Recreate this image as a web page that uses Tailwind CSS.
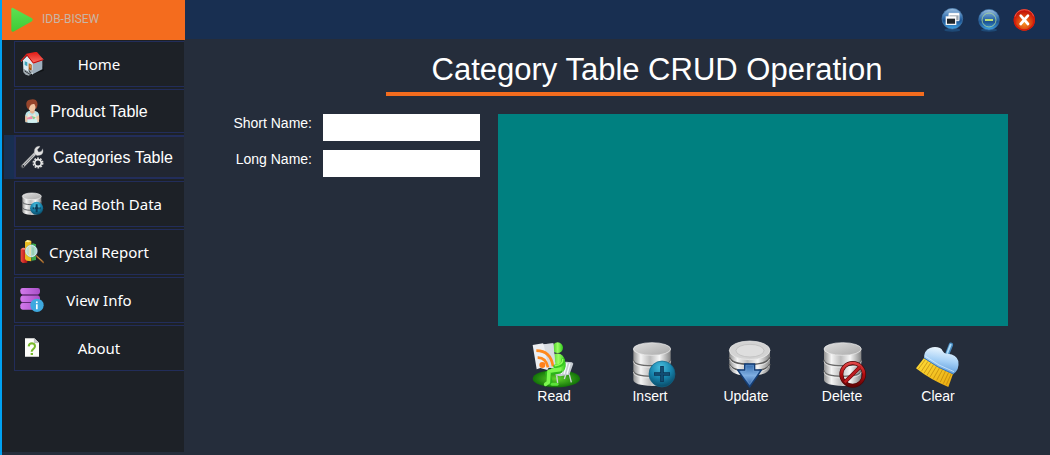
<!DOCTYPE html>
<html lang="en">
<head>
<meta charset="utf-8">
<meta name="viewport" content="width=device-width, initial-scale=1">
<title>Category Table CRUD Operation</title>
<script src="https://cdn.jsdelivr.net/npm/@tailwindcss/browser@4"></script>
</head>
<body class="flex min-h-screen border-l-2 border-[#00a2f3] bg-[#252d3b] text-white font-['Liberation_Sans',Arial,sans-serif]">
<svg width="0" height="0" class="absolute" aria-hidden="true">
  <defs>
    <linearGradient id="metal"><stop offset="0" stop-color="#929292"/><stop offset=".2" stop-color="#f4f4f4"/><stop offset=".45" stop-color="#bcbcbc"/><stop offset=".7" stop-color="#f6f6f6"/><stop offset="1" stop-color="#858585"/></linearGradient>
    <linearGradient id="lid" x1="0" y1="0" x2="1" y2="1"><stop offset="0" stop-color="#dedede"/><stop offset="1" stop-color="#a9a9a9"/></linearGradient>
    <radialGradient id="teal" cx=".45" cy=".25" r=".8"><stop offset="0" stop-color="#4cc0df"/><stop offset=".5" stop-color="#1785ae"/><stop offset="1" stop-color="#07435f"/></radialGradient>
    <linearGradient id="orb" x1="0" y1="0" x2="0" y2="1"><stop offset="0" stop-color="#9dbfe0"/><stop offset=".4" stop-color="#3d78b5"/><stop offset=".6" stop-color="#1c5290"/><stop offset="1" stop-color="#3fa4e6"/></linearGradient>
    <radialGradient id="redorb" cx=".5" cy=".65" r=".6"><stop offset="0" stop-color="#f79420"/><stop offset=".55" stop-color="#dc4310"/><stop offset="1" stop-color="#be0d08"/></radialGradient>
    <linearGradient id="play" x1="0" y1="0" x2="0" y2="1"><stop offset="0" stop-color="#5ce052"/><stop offset="1" stop-color="#3fcb35"/></linearGradient>
    <linearGradient id="arrow" x1="0" y1="0" x2="0" y2="1"><stop offset="0" stop-color="#2f67aa"/><stop offset=".5" stop-color="#7eaee2"/><stop offset="1" stop-color="#1e5197"/></linearGradient>
    <linearGradient id="brush" x1=".6" y1="0" x2=".4" y2="1"><stop offset="0" stop-color="#f2faff"/><stop offset=".5" stop-color="#a5d0f6"/><stop offset="1" stop-color="#5496da"/></linearGradient>
    <linearGradient id="bristle" x1="0" y1="0" x2="1" y2="1"><stop offset="0" stop-color="#ffdf39"/><stop offset="1" stop-color="#e9a90e"/></linearGradient>
    <linearGradient id="purple"><stop offset="0" stop-color="#d37aec"/><stop offset="1" stop-color="#a94fc8"/></linearGradient>
    <linearGradient id="red"><stop offset="0" stop-color="#ee4a3c"/><stop offset="1" stop-color="#a90d12"/></linearGradient>
    <radialGradient id="grass"><stop offset="0" stop-color="#62d52b"/><stop offset="1" stop-color="#127208"/></radialGradient>
    <linearGradient id="green"><stop offset="0" stop-color="#36bd20"/><stop offset=".5" stop-color="#9bff61"/><stop offset="1" stop-color="#30c91e"/></linearGradient>
    <linearGradient id="roof" x1="0" y1="0" x2="0" y2="1"><stop offset="0" stop-color="#e01812"/><stop offset="1" stop-color="#ff7468"/></linearGradient>
    <linearGradient id="noSign" x1="0" y1="0" x2="0" y2="1"><stop offset="0" stop-color="#e04646"/><stop offset=".5" stop-color="#b30d10"/><stop offset="1" stop-color="#650406"/></linearGradient>
  </defs>
</svg>

<aside class="flex w-[183px] shrink-0 flex-col">
  <div class="flex h-10 items-center gap-2 bg-[#f46c1e] pl-2">
    <svg class="h-7 w-6" viewBox="30 12 72 84" aria-hidden="true"><path d="M39 18 96 49Q101 54 96 58L40 89Q34 91 34 84V22Q34 16 39 18Z" fill="url(#play)"/></svg>
    <span class="pb-0.5 font-['Roboto',sans-serif] text-xs text-[#c9b5a5]">IDB-BISEW</span>
  </div>
  <nav class="mr-px mb-[3px] flex grow flex-col gap-0.5 bg-[#1d2127] pt-px font-['Noto_Sans',sans-serif] text-[15px]">
    <button type="button" class="ml-3 flex h-[46px] items-center border border-r-0 border-[#222d5a] pl-[5px]">
      <svg class="size-6" viewBox="60 156 72 72" aria-hidden="true">
        <path d="M70 216 86 227 131 212 130 199 84 207Z" fill="#080a0d" opacity=".65"/>
        <path d="m69 181 13-14 17 20v37l-29-17z" fill="#dceaf1"/><path d="m98 189 29-15v34l-29 15z" fill="#9eafbd"/>
        <path d="m62 182 17-21 31-6 21 24-31 12-20-25-16 20Z" fill="url(#roof)"/>
        <path d="m63 183 17-19 20 25 30-10" fill="none" stroke="#b90909" stroke-width="3"/>
        <path d="m74 184 8 3v12l-8-4z" fill="#3fa4b8"/><path d="m86 190 9 4v20l-9-6z" fill="#a54e0d"/><path d="m88 192 5 3v10l-5-3z" fill="#dc8c3b"/>
        <path d="m69 207 15 8 12-6 6 5-15 13-10-3-7-7Z" fill="#a3adb4"/><path d="m74 213 16 10m-4-14 6 11" stroke="#34393e" stroke-width="3"/>
      </svg>
      <span class="flex-1 pr-[30px]">Home</span>
    </button>
    <button type="button" class="ml-3 flex h-11 items-center border border-r-0 border-[#222d5a] pl-[5px]">
      <svg class="size-6" viewBox="60 42 72 72" aria-hidden="true">
        <path d="M76 112V91q0-10 13-14h15q12 3 13 13v22q-21 4-41 0Z" fill="#b9e3e7"/>
        <path d="M76 91q-2 14 1 20h5l1-15m34-6q2 14-1 21h-6l-2-15" fill="#efc2a0"/>
        <path d="M90 73h14v9q-7 8-14 0z" fill="#e5ae8a"/><ellipse cx="96" cy="64" rx="12" ry="15" fill="#f2c7a4"/>
        <path d="M81 68q-7-20 8-24 19-5 23 9 2 11-4 19-1-9-5-15-11-2-14 8l-3 9z" fill="#96452c"/>
        <path d="m84 84 12 10 9-10 5 18H82z" fill="#f0e6d5"/><path d="m80 99 15-6 5 7-15 7z" fill="#ef8ca8"/><path d="m95 93 12 4-6 7z" fill="#7fcf8f"/><path d="M83 103h29v10H83z" fill="#d3f1f0"/>
      </svg>
      <span class="flex-1 pt-0.5 pr-[30px] font-['Liberation_Sans',Arial,sans-serif] text-base">Product Table</span>
    </button>
    <button type="button" aria-current="page" class="ml-0.5 flex h-11 items-stretch bg-[#182f51]">
      <span class="ml-2.5 flex flex-1 items-center border-y-2 border-l-2 border-[#222d5a] bg-[#212631] pl-1">
      <svg class="size-6" viewBox="60 180 72 72" aria-hidden="true">
        <path d="m68 244 38-39" stroke="#414449" stroke-width="12" stroke-linecap="round"/><path d="m69 243 38-39" stroke="#c9cacc" stroke-width="8" stroke-linecap="round"/><path d="m73 239 27-28" stroke="#77797c" stroke-width="3"/>
        <path d="M103 205q-3-20 15-22l2 2-8 9 4 7 8-2 4-8q5 15-8 20l-9 1Z" fill="#e2e2e2" stroke="#717478"/>
        <circle cx="70" cy="243" r="3" fill="#24282f"/>
        <circle cx="114" cy="234" r="14" fill="none" stroke="#d8d8d8" stroke-width="5" stroke-dasharray="5.5 3.3"/><circle cx="114" cy="234" r="10" fill="none" stroke="#e7e7e7" stroke-width="5"/>
      </svg>
      <span class="flex-1 pt-0.5 pr-0.5 font-['Liberation_Sans',Arial,sans-serif] text-base">Categories Table</span>
      </span>
    </button>
    <button type="button" class="ml-3 flex h-[46px] items-center border border-r-0 border-[#222d5a] pl-[5px]">
      <svg class="size-6" viewBox="60 36 72 72" aria-hidden="true">
        <path d="M67 50v44q0 10 28 11 29-1 29-11V50z" fill="url(#metal)"/><path d="M67 64q0 10 29 10 28 0 28-10M67 81q0 10 29 10 28 0 28-10" fill="none" stroke="#626568" stroke-width="3"/>
        <ellipse cx="95.500" cy="49" rx="28.500" ry="10" fill="url(#lid)" stroke="#f0f0f0" stroke-width="2"/>
        <circle cx="110" cy="85" r="19.500" fill="url(#teal)"/><path d="M110 73v24M98 85h24" stroke="#0b3e5b" stroke-width="6"/><path d="M103 77v9m14-9v9" stroke="#74c6dd" stroke-width="2"/>
      </svg>
      <span class="flex-1 pr-3.5">Read Both Data</span>
    </button>
    <button type="button" class="ml-3 flex h-[46px] items-center border border-r-0 border-[#222d5a] pl-[5px]">
      <svg class="size-6" viewBox="60 180 72 72" aria-hidden="true">
        <path d="m62 208 7-5 13 2v43l-14 1-6-5z" fill="url(#red)"/><path d="m62 208 7-5 13 2-8 4z" fill="#ff8475"/>
        <path d="m75 185 7-5 12 3v61l-14-2-5-5z" fill="#e9bc20"/><path d="m75 185 7-5 12 3-8 4z" fill="#fff099"/>
        <path d="m92 194 7-4 9 3v47l-13 2z" fill="#39a94d"/>
        <path d="m108 227 22 20" stroke="#8f5c26" stroke-width="5" stroke-linecap="round"/><path d="m110 228 18 16" stroke="#dca35c" stroke-width="2"/>
        <circle cx="94" cy="213" r="17" fill="#b9e0db" fill-opacity=".92" stroke="#e4f6ff" stroke-width="3"/><circle cx="94" cy="213" r="18.500" fill="none" stroke="#6298b0"/><path d="m87 199 6-1v29h-6z" fill="#eee6a7" opacity=".7"/><path d="M99 202v23" stroke="#8bc9a3" stroke-width="7" opacity=".6"/>
      </svg>
      <span class="flex-1 pr-[30px]">Crystal Report</span>
    </button>
    <button type="button" class="ml-3 flex h-[46px] items-center border border-r-0 border-[#222d5a] pl-[5px]">
      <svg class="size-6" viewBox="60 39 72 72" aria-hidden="true">
        <path d="M65 55h51v35H65z" fill="#632c78"/><rect x="61" y="39" width="59" height="19" rx="7" fill="url(#purple)"/><rect x="61" y="62" width="59" height="19" rx="7" fill="url(#purple)"/><rect x="61" y="84" width="59" height="20" rx="7" fill="url(#purple)"/>
        <circle cx="111" cy="91" r="20" fill="#3ea9df"/><circle cx="110.500" cy="82" r="3" fill="white"/><path d="M110.500 88v15" stroke="white" stroke-width="5"/>
      </svg>
      <span class="flex-1 pr-[30px]">View Info</span>
    </button>
    <button type="button" class="ml-3 flex h-[46px] items-center border border-r-0 border-[#222d5a] pl-[5px]">
      <svg class="size-6" viewBox="60 183 72 72" aria-hidden="true">
        <path d="M75 190h28l14 13v42H75z" fill="#fcfcfa"/><path d="M103 190v13h14z" fill="#c8cacc"/><path d="M103 192v11h12" fill="none" stroke="#888"/>
        <path d="M86 214q1-9 10-9 9 1 9 9 0 5-6 9-4 3-4 7" fill="none" stroke="#77b82a" stroke-width="6"/><path d="M92 234h7v6h-7z" fill="#77b82a"/>
      </svg>
      <span class="flex-1 pr-[30px]">About</span>
    </button>
  </nav>
</aside>

<div class="flex min-w-0 flex-1 flex-col">
  <header class="flex h-[39px] items-center justify-end gap-3 bg-[#182f51] pr-3.5">
    <button type="button" aria-label="Restore window"><svg class="size-6" viewBox="60 24 72 72" aria-hidden="true">
      <ellipse cx="97" cy="90" rx="24" ry="5" fill="#2d87ce" opacity=".3"/><circle cx="97" cy="56" r="31" fill="url(#orb)" stroke="#477aaa" stroke-width="2"/>
      <path d="M87 40h30v22H87z" fill="#9ba5ae" stroke="#eef2f5" stroke-width="3"/><path d="M87 40h30v6H87z" fill="#fff"/><path d="M79 51h28v22H79z" fill="#20262b" stroke="#f4f4f4" stroke-width="4"/><path d="M79 51h28v5H79z" fill="#fff"/>
    </svg></button>
    <button type="button" aria-label="Minimize window"><svg class="size-6" viewBox="171 24 72 72" aria-hidden="true">
      <ellipse cx="210" cy="90" rx="24" ry="5" fill="#2d87ce" opacity=".3"/><circle cx="210" cy="59" r="31" fill="url(#orb)" stroke="#326a9f" stroke-width="2"/>
      <circle cx="210" cy="60" r="21" fill="none" stroke="#a8d59a" stroke-width="2.500"/><path d="M198 60h24" stroke="#bce078" stroke-width="6"/>
    </svg></button>
    <button type="button" aria-label="Close window"><svg class="size-6" viewBox="276 24 72 72" aria-hidden="true">
      <circle cx="313" cy="60" r="32" fill="url(#redorb)"/><circle cx="313" cy="60" r="30" fill="none" stroke="#d41a0b" stroke-width="4"/><path d="M285 50q5-20 28-21 22 1 28 20" fill="none" stroke="#ed7467" stroke-width="2"/>
      <path d="m302 47 22 25m0-25-22 25" stroke="white" stroke-width="8" stroke-linecap="round"/>
    </svg></button>
  </header>

  <main class="flex flex-1 flex-col pr-[42px] pl-12">
    <h1 class="mt-2 mr-[84px] ml-[153px] border-b-4 border-[#f46c1e] pt-0.5 pb-0.5 pl-1 text-center text-[31px] leading-[41px] whitespace-nowrap">Category Table CRUD Operation</h1>
    <div class="mt-[18px] flex gap-[18px]">
      <form class="grid w-[247px] shrink-0 grid-cols-[79px_1fr] content-start gap-x-[11px] gap-y-[9px] text-sm leading-[18px]">
        <label for="short-name" class="text-right whitespace-nowrap">Short Name:</label>
        <input id="short-name" type="text" class="h-[27px] w-full bg-white px-1 text-black">
        <label for="long-name" class="text-right whitespace-nowrap">Long Name:</label>
        <input id="long-name" type="text" class="h-[27px] w-full bg-white px-1 text-black">
      </form>
      <section class="min-w-0 flex-1">
        <div class="h-[212px] bg-[#008080]" role="region" aria-label="Category records"></div>
        <div class="mt-[15px] grid grid-cols-5 pr-[22px] pl-2 text-sm leading-[14px]">
          <button type="button" class="flex flex-col items-center">
            <svg class="size-12 overflow-visible" viewBox="30 18 144 144" aria-hidden="true">
              <ellipse cx="109" cy="131" rx="71" ry="26" fill="url(#grass)"/>
              <path d="m126 83 12-3 18 2 4 4-12 33-28 5-16-4 12-8Z" fill="#c5cbd1"/><path d="m132 86-8 31m17-33-9 33m18-32-9 32" stroke="#f7fafc" stroke-width="4"/><path d="m110 121 3 24m35-27 6 24m-17-22-4 12" fill="none" stroke="#cfd5da" stroke-width="4"/>
              <path d="M99 59q18-9 29 3 9 10 9 31-2 20-22 23-17-1-22-15Z" fill="url(#green)"/>
              <circle cx="113" cy="38" r="16" fill="url(#green)"/>
              <path d="M119 108q-24 4-36 7l8 29" fill="none" stroke="#2cb51a" stroke-width="15" stroke-linecap="round" stroke-linejoin="round"/>
              <path d="M120 104q-20 2-33 5l-2 33-8 6" fill="none" stroke="#7df750" stroke-width="11" stroke-linecap="round" stroke-linejoin="round"/>
              <path d="M97 148h14" stroke="#5be43a" stroke-width="9" stroke-linecap="round"/>
              <path d="m38 30 31-5 2 3 29-3 7 75-21-2-4 7-21-6-11 4Z" fill="#eceef1"/><path d="m71 28 29-3 7 75-21-2z" fill="#cfd3da" opacity=".7"/>
              <circle cx="67" cy="90" r="9" fill="#ff801b"/><path d="M53 68q24-1 31 29M49 47q43 0 50 47" fill="none" stroke="#ff891d" stroke-width="8"/>
              <path d="M129 75q2 18-24 19" fill="none" stroke="#35c81e" stroke-width="11" stroke-linecap="round"/><path d="M128 74q1 15-22 18" fill="none" stroke="#8ffb5e" stroke-width="5" stroke-linecap="round"/>
            </svg>
            Read
          </button>
          <button type="button" class="flex flex-col items-center">
            <svg class="size-12 overflow-visible" viewBox="318 18 144 144" aria-hidden="true">
              <path d="M340 43v92q2 16 56 18 54-2 56-18V43z" fill="url(#metal)"/><path d="M340 74q1 18 56 18 55 0 56-18M340 106q1 18 56 18 55 0 56-18" fill="none" stroke="#686868" stroke-width="4"/><path d="M340 79q1 18 56 18 55 0 56-18M340 111q1 18 56 18 55 0 56-18" fill="none" stroke="#eee" stroke-width="2"/>
              <ellipse cx="396" cy="42" rx="56" ry="19" fill="url(#lid)" stroke="#f0f0f0" stroke-width="2"/>
              <circle cx="426" cy="117" r="39" fill="url(#teal)" stroke="#126283" stroke-width="2"/><path d="M426 93v48M402 117h48" stroke="#0b3556" stroke-width="11"/><path d="M426 95v44M404 117h44" stroke="#124c72" stroke-width="6"/>
            </svg>
            Insert
          </button>
          <button type="button" class="flex flex-col items-center">
            <svg class="size-12 overflow-visible" viewBox="96 18 144 144" aria-hidden="true">
              <path d="M118 45v53q8 24 61 24 54 0 61-24V45z" fill="url(#metal)"/><path d="M118 67q7 21 61 21t61-21M118 87q7 21 61 21t61-21" fill="none" stroke="#5e5e5e" stroke-width="5"/><path d="M119 72q7 21 60 21t60-21M120 92q9 21 59 21t59-21" fill="none" stroke="#eee" stroke-width="2"/>
              <ellipse cx="179" cy="46" rx="61" ry="28" fill="#d3d3d3" stroke="#eee" stroke-width="2"/><ellipse cx="180" cy="47" rx="42" ry="19" fill="#dedede" stroke="#b8b8b8" stroke-width="2"/>
              <path d="M164 87h30v18h20l-35 51-36-51h21z" fill="url(#arrow)" stroke="#153e75" stroke-width="4" stroke-linejoin="round"/><path d="M168 91h22v18h15l-26 39-26-39h15z" fill="none" stroke="#89b2df" stroke-width="1.500" opacity=".7"/>
            </svg>
            Update
          </button>
          <button type="button" class="flex flex-col items-center">
            <svg class="size-12 overflow-visible" viewBox="384 18 144 144" aria-hidden="true">
              <path d="M402 43v92q2 16 56 18 54-2 56-18V43z" fill="url(#metal)"/><path d="M402 74q1 18 56 18 55 0 56-18M402 106q1 18 56 18 55 0 56-18" fill="none" stroke="#686868" stroke-width="4"/><path d="M402 79q1 18 56 18 55 0 56-18M402 111q1 18 56 18 55 0 56-18" fill="none" stroke="#eee" stroke-width="2"/>
              <ellipse cx="458" cy="42" rx="56" ry="19" fill="url(#lid)" stroke="#f0f0f0" stroke-width="2"/>
              <circle cx="488" cy="118" r="34" fill="none" stroke="#4c0506" stroke-width="12"/><path d="m464 142 48-48" stroke="#71080a" stroke-width="11"/><circle cx="488" cy="118" r="34" fill="none" stroke="url(#noSign)" stroke-width="8"/><path d="m464 142 48-48" stroke="#bd1c20" stroke-width="7"/>
            </svg>
            Delete
          </button>
          <button type="button" class="flex flex-col items-center">
            <svg class="size-12 overflow-visible" viewBox="102 93 144 144" aria-hidden="true">
              <path d="M132 144 108 175q43 34 97 56l15-42z" fill="url(#bristle)"/>
              <path d="m136 149-21 28m29-23-20 30m28-25-20 31m29-27-20 33m29-28-20 33m29-28-19 33m28-28-18 33m27-29-16 34m25-29-16 34m24-30-15 33" stroke="#a56b05" stroke-width="2" opacity=".75"/>
              <path d="m203 129 10-25" stroke="#4688bd" stroke-width="13" stroke-linecap="round"/><path d="m202 129 10-25" stroke="#a9d9f8" stroke-width="6" stroke-linecap="round"/>
              <path d="M132 143q0-21 18-29 15-6 30 0 6 3 8 9 5 10 16 8 25 2 31 22 4 26-15 39-43-16-88-49Z" fill="url(#brush)"/><path d="M134 137q42 32 88 48" fill="none" stroke="#dff2ff" stroke-width="2"/><path d="M132 144q44 32 88 48" fill="none" stroke="#3775ba" stroke-width="3"/>
            </svg>
            Clear
          </button>
        </div>
      </section>
    </div>
  </main>
</div>
</body>
</html>
